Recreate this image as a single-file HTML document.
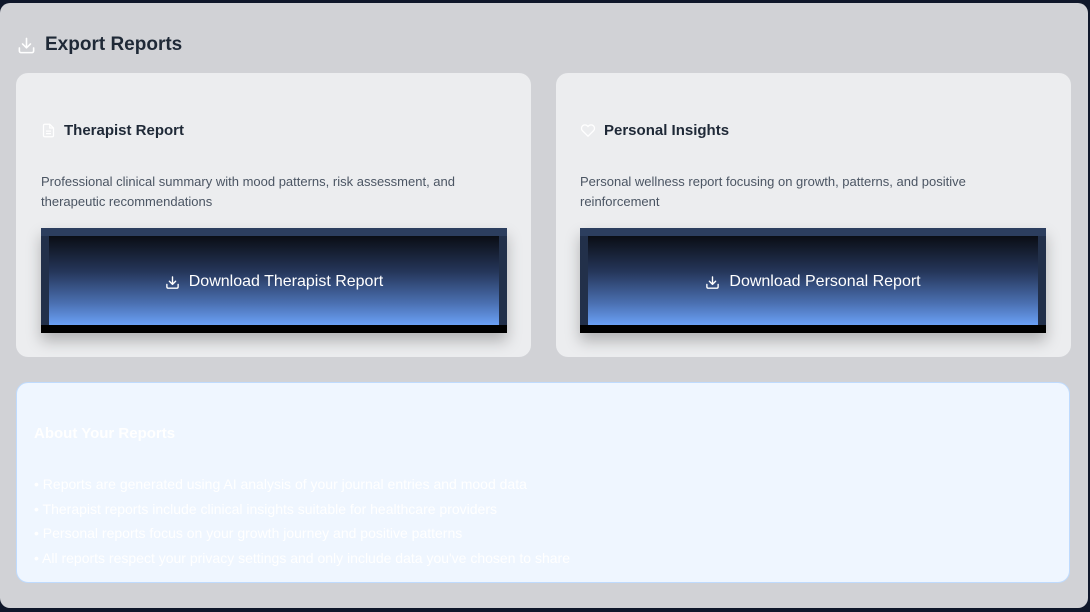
<!DOCTYPE html>
<html><head><style>
*{margin:0;padding:0;box-sizing:border-box}
body{width:1090px;height:612px;background:#0f172a;font-family:"Liberation Sans",sans-serif;position:relative;overflow:hidden}
.panel{position:absolute;left:0;top:3px;width:1088px;height:605px;background:#d1d2d6;border-radius:10px}
.h{position:absolute;left:17px;top:31px;font-size:19px;color:#1f2937;display:flex;align-items:center;gap:9px;font-weight:600}
.card{position:absolute;top:73px;width:515px;height:284px;background:#ecedef;border-radius:12px}
.ct{position:absolute;left:25px;top:49px;font-size:15px;font-weight:bold;color:#1f2937;display:flex;align-items:center;gap:8px}
.cd{position:absolute;left:25px;top:99px;width:455px;font-size:13px;line-height:20px;color:#4b5563}
.btn{position:absolute;left:25px;top:155px;width:466px;height:105px;background:#000;box-shadow:0 8px 14px rgba(0,0,0,.25)}
.btn .top{position:absolute;left:0;top:0;width:100%;height:8px;background:#2c3e5e}
.btn .side{position:absolute;top:8px;height:89px;width:100%;background:#22304a}
.btn .in{position:absolute;left:8px;top:8px;width:450px;height:89px;background:linear-gradient(#0a0d14,#25365a 40%,#4a6fb0 75%,#6aa0f5);color:#fff;font-size:16px;display:flex;align-items:center;justify-content:center;gap:9px;padding-top:3px}
.about{position:absolute;left:16px;top:382px;width:1054px;height:201px;background:#eff6ff;border:1px solid #bfdbfe;border-radius:12px;color:#fff}
.about h3{position:absolute;left:17px;top:42px;font-size:15px}
.about ul{position:absolute;left:17px;top:89px;list-style:none;font-size:14px;line-height:24.7px}
</style></head><body>
<div class="panel">
<div class="h"><svg width="19" height="19" viewBox="0 0 24 24" fill="none" stroke="#fff" stroke-width="2" stroke-linecap="round" stroke-linejoin="round"><path d="M21 15v4a2 2 0 0 1-2 2H5a2 2 0 0 1-2-2v-4M7 10l5 5 5-5M12 15V3"/></svg>Export Reports</div>
<div class="card" style="left:16px;top:70px">
<div class="ct"><svg width="15" height="15" viewBox="0 0 24 24" fill="none" stroke="#fff" stroke-width="2"><path d="M14 2H6a2 2 0 0 0-2 2v16a2 2 0 0 0 2 2h12a2 2 0 0 0 2-2V8z"/><path d="M14 2v6h6M16 13H8M16 17H8"/></svg>Therapist Report</div>
<div class="cd">Professional clinical summary with mood patterns, risk assessment, and therapeutic recommendations</div>
<div class="btn"><div class="top"></div><div class="side"></div><div class="in"><svg width="15" height="15" viewBox="0 0 24 24" fill="none" stroke="#fff" stroke-width="2.2" stroke-linecap="round" stroke-linejoin="round"><path d="M21 15v4a2 2 0 0 1-2 2H5a2 2 0 0 1-2-2v-4M7 10l5 5 5-5M12 15V3"/></svg>Download Therapist Report</div></div>
</div>
<div class="card" style="left:556px;top:70px">
<div class="ct" style="left:24px"><svg width="16" height="15" viewBox="0 0 24 24" fill="none" stroke="#fff" stroke-width="2"><path d="M20.8 4.6a5.5 5.5 0 0 0-7.8 0L12 5.7l-1-1.1a5.5 5.5 0 0 0-7.8 7.8L12 21.2l8.8-8.8a5.5 5.5 0 0 0 0-7.8z"/></svg>Personal Insights</div>
<div class="cd" style="left:24px;width:430px">Personal wellness report focusing on growth, patterns, and positive reinforcement</div>
<div class="btn" style="left:24px"><div class="top"></div><div class="side"></div><div class="in"><svg width="15" height="15" viewBox="0 0 24 24" fill="none" stroke="#fff" stroke-width="2.2" stroke-linecap="round" stroke-linejoin="round"><path d="M21 15v4a2 2 0 0 1-2 2H5a2 2 0 0 1-2-2v-4M7 10l5 5 5-5M12 15V3"/></svg>Download Personal Report</div></div>
</div>
<div class="about" style="top:379px">
<h3>About Your Reports</h3>
<ul>
<li>• Reports are generated using AI analysis of your journal entries and mood data</li>
<li>• Therapist reports include clinical insights suitable for healthcare providers</li>
<li>• Personal reports focus on your growth journey and positive patterns</li>
<li>• All reports respect your privacy settings and only include data you've chosen to share</li>
</ul>
</div>
</div>
</body></html>
